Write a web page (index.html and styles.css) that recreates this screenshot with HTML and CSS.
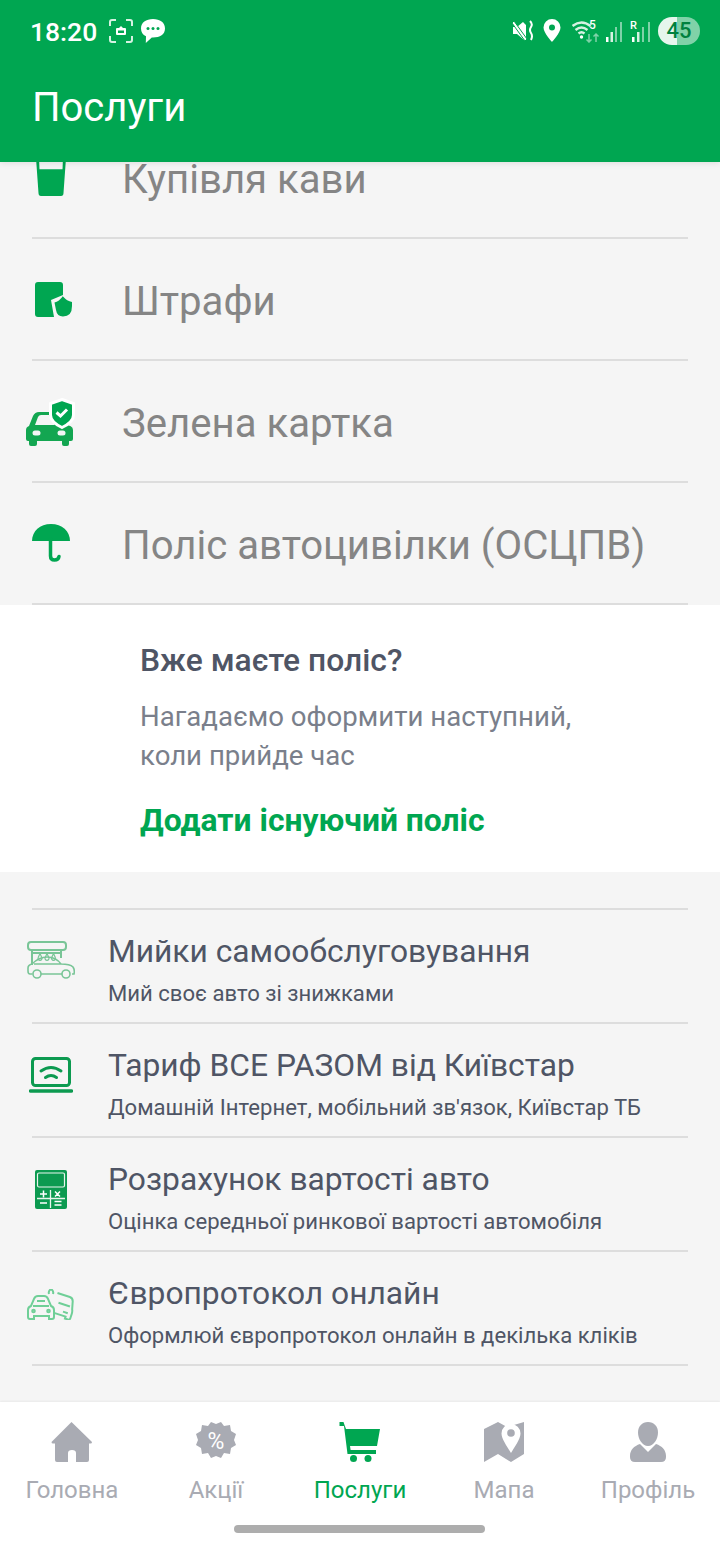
FILE: index.html
```html
<!DOCTYPE html>
<html lang="uk">
<head>
    <meta charset="UTF-8">
    <meta name="viewport" content="width=device-width, initial-scale=1.0">
    <title>Послуги</title>
    <link rel="stylesheet" href="styles.css">
</head>
<body>

<!-- Шапка -->
<div class="header">
    <div class="status-bar">
        <span class="status-time">18:20</span>
        <svg class="status-shot" width="24" height="24" viewBox="0 0 24 24" fill="none" stroke="#d6f2e2" stroke-width="2">
            <path d="M1 7V3q0-2 2-2h4M17 1h4q2 0 2 2v4M23 17v4q0 2-2 2h-4M7 23H3q-2 0-2-2v-4"/>
            <path d="M7 10q0-1 1-1h2l2-2 2 2h2q1 0 1 1v5q0 1-1 1H8q-1 0-1-1z" fill="#fff" stroke="none"/>
            <path d="M9 11.500h6v2.500H9z" fill="#00a651" stroke="none"/>
        </svg>
        <svg class="status-chat" width="24" height="24" viewBox="0 0 24 24">
            <path d="M12 0C5 0 0 3.500 0 9.500c0 3.700 1.800 6.300 5 7.700L4.800 24l6-5.500H12c7 0 12-3 12-9S19 0 12 0z" fill="#fff"/>
            <circle cx="7" cy="9.500" r="1.500" fill="#00a651"/>
            <circle cx="12" cy="9.500" r="1.500" fill="#00a651"/>
            <circle cx="17" cy="9.500" r="1.500" fill="#00a651"/>
        </svg>
        <div class="status-right">
            <svg width="22" height="24" viewBox="0 0 22 24">
                <path d="M1 8h4l6-5 3 3v16l-3-2-6-5H1z" fill="#fff"/>
                <path d="M0 4l2-2 13 18-2 2z" fill="#fff" stroke="#00a651" stroke-width="1"/>
                <path d="M18 2q3 3 1 6t0 6q2 3 0 7" fill="none" stroke="#fff" stroke-width="2"/>
            </svg>
            <svg class="status-pin" width="18" height="24" viewBox="0 0 18 24">
                <path fill-rule="evenodd" d="M9 0a8.500 8.500 0 0 1 8.500 8.500C17.500 14 9 23 9 23S.5 14 .5 8.500A8.500 8.500 0 0 1 9 0zm0 5.500a3 3 0 1 0 0 6 3 3 0 0 0 0-6z" fill="#fff"/>
            </svg>
            <svg class="status-wifi" width="28" height="24" viewBox="0 0 28 24" fill="none" stroke="#d6f2e2" stroke-width="2.400">
                <path d="M.5 7q9-7 18 0M3.500 11q6-5 12 0M6.500 14.500q3-2.500 6 0"/>
                <circle cx="9.500" cy="18" r="1.700" fill="#fff" stroke="none"/>
                <path d="M17 15v8M14.500 20.500l2.500 2.500 2.500-2.500" stroke="#7fd2a8" stroke-width="1.500"/>
                <path d="M24 23v-8M21.500 17.500l2.500-2.500 2.500 2.500" stroke="#7fd2a8" stroke-width="1.500"/>
                <text x="17" y="10" class="status-five">5</text>
            </svg>
            <svg class="status-signal" width="16" height="24" viewBox="0 0 16 24">
                <rect x="0" y="18" width="2.500" height="5" fill="#fff"/>
                <rect x="4.500" y="13" width="2.500" height="10" fill="#d6f2e2"/>
                <rect x="9" y="8" width="2" height="15" fill="#7fd2a8"/>
                <rect x="14" y="3" width="2" height="20" fill="#7fd2a8"/>
            </svg>
            <svg class="status-signal" width="20" height="24" viewBox="0 0 20 24">
                <text x="0" y="10" class="status-roam">R</text>
                <rect x="2" y="18" width="2.500" height="5" fill="#fff"/>
                <rect x="7" y="13" width="2.500" height="10" fill="#d6f2e2"/>
                <rect x="12" y="8" width="2" height="15" fill="#7fd2a8"/>
                <rect x="18" y="3" width="2" height="20" fill="#7fd2a8"/>
            </svg>
            <div class="battery">45</div>
        </div>
    </div>
    <h1>Послуги</h1>
</div>

<div class="content">
    <div class="content-inner">

        <!-- Основні послуги -->
        <div class="service">
            <div class="service-icon">
                <svg class="icon-cup" width="30" height="38" viewBox="0 0 30 38">
                    <path d="M0 0h30l-2.500 35q0 3-2.500 3H5q-2.500 0-2.500-3z" fill="#00a651"/>
                    <path d="M3 0h24l-.5 11.300h-23z" fill="#f5f5f5"/>
                </svg>
            </div>
            <span>Купівля кави</span>
        </div>
        <div class="service">
            <div class="service-icon">
                <svg class="icon-fines" width="37" height="35" viewBox="0 0 37 35">
                    <path d="M3 0h22q3 0 3 3v10l-12 5 3 17H3q-3 0-3-3V3q0-3 3-3z" fill="#00a651"/>
                    <path d="M28 14.500q4 4.500 9 5.500v4q0 10.500-9 10.500-6 0-7-6.500l-1.500-7.500q4.500-1 8.500-6.500z" fill="#00a651"/>
                </svg>
            </div>
            <span>Штрафи</span>
        </div>
        <div class="service">
            <div class="service-icon">
                <svg class="icon-car" width="50" height="49" viewBox="0 0 50 49">
                    <path d="M0 33q0-3 3-4l4-10q2-4 6-4h10l8 13h7q9 0 9 5v9q0 2-2 2h-2v3q0 2-2 2h-3q-2 0-2-2v-3H11v3q0 2-2 2H5q-2 0-2-2v-3H2q-2 0-2-2z" fill="#13a651"/>
                    <path d="M9 28l3-8q1-2 3-2h8l6 10z" fill="#f5f5f5"/>
                    <rect x="6.500" y="33.500" width="8" height="5" rx="2.500" fill="#f5f5f5"/>
                    <rect x="31.500" y="33.500" width="8" height="5" rx="2.500" fill="#f5f5f5"/>
                    <path d="M36 2.500l11.500 4v11.500q0 7-11.500 12.500-11.500-5.500-11.500-12.500V6.500z" fill="#00a651" stroke="#fff" stroke-width="3"/>
                    <path d="M30.500 15.500l4 3.500 6.500-6.500" fill="none" stroke="#fff" stroke-width="3"/>
                </svg>
            </div>
            <span>Зелена картка</span>
        </div>
        <div class="service">
            <div class="service-icon">
                <svg width="38" height="38" viewBox="0 0 38 38">
                    <path d="M0 17C0 7 8 0 19 0s19 7 19 17z" fill="#00a651"/>
                    <path d="M18.500 15v17q0 4 4 4t4.500-3.500" fill="none" stroke="#00a651" stroke-width="3.500" stroke-linecap="round"/>
                </svg>
            </div>
            <span>Поліс автоцивілки (ОСЦПВ)</span>
        </div>

        <!-- Блок поліса -->
        <div class="policy-card">
            <h2>Вже маєте поліс?</h2>
            <p>Нагадаємо оформити наступний,<br>коли прийде час</p>
            <a href="#">Додати існуючий поліс</a>
        </div>

        <!-- Додаткові послуги -->
        <div class="extras">
            <div class="extra">
                <div class="extra-icon">
                    <svg class="icon-wash" width="48" height="38" viewBox="0 0 48 38" fill="none" stroke="#79c597" stroke-width="1.600">
                        <rect x="1" y="1" width="38" height="8" rx="3" stroke-width="2"/>
                        <path d="M5 9v15M34 9v8M5 12h29" stroke-width="2"/>
                        <path d="M13 12.500l1.800 4a2 2 0 1 1-3.600 0zM20 12.500l1.800 4a2 2 0 1 1-3.600 0zM26.500 12.500l1.800 4a2 2 0 1 1-3.600 0z" stroke-width="1.200"/>
                        <path d="M5.500 33H3q-2 0-2-3v-3q0-3 4-4 7-7 15-7 9 0 14 7 9 0 12 3 2 3 1 7h-2M14 33h21M7 23h27"/>
                        <circle cx="10" cy="33" r="4"/>
                        <circle cx="39" cy="33" r="4"/>
                    </svg>
                </div>
                <div class="extra-text">
                    <div class="extra-title">Мийки самообслуговування</div>
                    <div class="extra-sub">Мий своє авто зі знижками</div>
                </div>
            </div>
            <div class="extra">
                <div class="extra-icon">
                    <svg class="icon-laptop" width="44" height="36" viewBox="0 0 44 36" fill="none" stroke="#0c9a50" stroke-width="3">
                        <rect x="3.500" y="1.500" width="37" height="27" rx="3"/>
                        <path d="M1.500 34h41" stroke-linecap="round" stroke-width="3.500"/>
                        <path d="M12 14q10-7 20 0M16.500 20.500q5.500-4 11 0" stroke-linecap="round"/>
                    </svg>
                </div>
                <div class="extra-text">
                    <div class="extra-title">Тариф ВСЕ РАЗОМ від Київстар</div>
                    <div class="extra-sub">Домашній Інтернет, мобільний зв'язок, Київстар ТБ</div>
                </div>
            </div>
            <div class="extra">
                <div class="extra-icon">
                    <svg class="icon-calc" width="32" height="39" viewBox="0 0 32 39">
                        <rect width="32" height="39" rx="2" fill="#0c9a50"/>
                        <rect x="2.500" y="3" width="27" height="14" rx="1.500" fill="none" stroke="#e8f5ed" stroke-width="1.200"/>
                        <path d="M2 28.500h28M15.500 20v18" stroke="#e8f5ed" stroke-width="1.300"/>
                        <path d="M5 24h7M8.500 20.500v7M5 33h7M20 21.500l5 5M25 21.500l-5 5M19.500 31.500h7M19.500 35h7" stroke="#fff" stroke-width="1.500"/>
                    </svg>
                </div>
                <div class="extra-text">
                    <div class="extra-title">Розрахунок вартості авто</div>
                    <div class="extra-sub">Оцінка середньої ринкової вартості автомобіля</div>
                </div>
            </div>
            <div class="extra">
                <div class="extra-icon">
                    <svg class="icon-crash" width="48" height="31" viewBox="0 0 48 31" fill="none" stroke="#6fcf97" stroke-width="2">
                        <path d="M1 28v-7q0-3 3-4l3-7q1-3 4-3h6q3 0 4 3l3 7q3 1 3 4v7q0 2-2 2h-3v-3H7v3H3q-2 0-2-2z"/>
                        <path d="M6 17h16M10 12h8"/>
                        <circle cx="6.500" cy="22" r="1.300"/>
                        <circle cx="21.500" cy="22" r="1.300"/>
                        <g transform="rotate(18 35 16)">
                            <path d="M27 6h13q3 0 4 3l2 8q1 2 1 4v5q0 2-2 2h-3v-2H29"/>
                            <path d="M31 15h12M38 22h5"/>
                        </g>
                        <path d="M22 5q-1-3 2-5 3 2 2 5"/>
                    </svg>
                </div>
                <div class="extra-text">
                    <div class="extra-title">Європротокол онлайн</div>
                    <div class="extra-sub">Оформлюй європротокол онлайн в декілька кліків</div>
                </div>
            </div>
        </div>
    </div>
</div>

<!-- Нижнє меню -->
<div class="tabbar">
    <div class="tabs">
        <div class="tab">
            <svg width="42" height="40" viewBox="0 0 42 40">
                <path d="M20.500 0L41 20q0 1.500-1.500 1.500H38V38q0 2-2 2H25V31q0-3-4-3t-4 3v9H6q-2 0-2-2V21.500H2q-1.500 0-1.500-1.500z" fill="#a9abb3"/>
            </svg>
            <span>Головна</span>
        </div>
        <div class="tab">
            <svg width="42" height="40" viewBox="0 0 42 40">
                <path d="M21 2l5-2 3 4 6-1 1 6 5 3-2 6 2 5-5 3-1 6-6-1-3 5-5-2-5 2-3-5-6 1-1-6-5-3 2-5-2-6 5-3 1-6 6 1 3-4z" fill="#a9abb3"/>
                <text x="21" y="27" text-anchor="middle" class="percent">%</text>
            </svg>
            <span>Акції</span>
        </div>
        <div class="tab tab-active">
            <svg width="42" height="40" viewBox="0 0 42 40">
                <path d="M.5 0h4l1.200 3.500L7 7h34l-3 17H11l.6 4H37v4H8.500L5 4H.5z" fill="#00a651"/>
                <circle cx="14.500" cy="36.500" r="3.500" fill="#00a651"/>
                <circle cx="29" cy="36.500" r="3.500" fill="#00a651"/>
            </svg>
            <span>Послуги</span>
        </div>
        <div class="tab">
            <svg width="42" height="40" viewBox="0 0 42 40">
                <path d="M1 7l14-7 9 5 17-5v32l-13 8-13-8-14 8z" fill="#a9abb3"/>
                <path d="M28 2a9.500 9.500 0 0 1 9.500 9.500C37.500 17 31 26 28 31c-3-5-9.500-14-9.500-19.500A9.500 9.500 0 0 1 28 2z" fill="#fff"/>
                <circle cx="28" cy="11" r="3.800" fill="#a9abb3"/>
            </svg>
            <span>Мапа</span>
        </div>
        <div class="tab">
            <svg width="42" height="40" viewBox="0 0 42 40">
                <path d="M21 0c6 0 10 4.500 10 10.500S27 24 21 24s-10-7.500-10-13.500S15 0 21 0z" fill="#a9abb3"/>
                <path d="M13 22l8 8 8-8c6 2 10 6 10 12v1q0 5-5 5H8q-5 0-5-5v-1c0-6 4-10 10-12z" fill="#a9abb3"/>
            </svg>
            <span>Профіль</span>
        </div>
    </div>
    <div class="home-indicator"></div>
</div>

</body>
</html>
```

FILE: styles.css
```css
/* Загальне */
* {
    box-sizing: border-box;
}

body {
    font-family: 'Roboto', sans-serif;
    margin: 0;
    width: 720px;
    height: 1544px;
    display: flex;
    flex-direction: column;
    background-color: #f5f5f5;
    overflow: hidden;
}

/* Шапка */
.header {
    height: 162px;
    background-color: #00a651;
    color: white;
    padding: 12px 20px 0 30px;
    flex-shrink: 0;
    position: relative;
    z-index: 1;
    box-shadow: 0 1px 6px rgba(0, 0, 0, 0.1);
}

.header h1 {
    margin: 34px 0 0 2px;
    font-size: 40px;
    line-height: 48px;
    font-weight: 400;
}

.status-bar {
    height: 38px;
    display: flex;
    align-items: center;
}

.status-time {
    font-size: 26.5px;
    font-weight: 500;
    width: 79px;
}

.status-chat {
    margin-left: 8px;
}

.status-right {
    margin-left: auto;
    display: flex;
    align-items: center;
}

.status-pin {
    margin-left: 9px;
}

.status-wifi {
    margin-left: 11px;
}

.status-five {
    font-size: 12px;
    font-weight: 500;
    fill: #fff;
    stroke: none;
}

.status-roam {
    font-size: 11px;
    font-weight: 500;
    fill: #fff;
}

.status-signal {
    margin-left: 6px;
}

.status-signal + .status-signal {
    margin-left: 8px;
}

.battery {
    width: 42px;
    height: 28px;
    margin-left: 8px;
    border-radius: 14px;
    background: linear-gradient(to right, #e6f6ed 0 45%, #80d2a8 45%);
    color: #00813f;
    font-size: 22px;
    font-weight: 500;
    line-height: 28px;
    text-align: center;
}

/* Основна частина */
.content {
    flex: 1;
    overflow: hidden;
}

.content-inner {
    margin-top: -45px;
}

.service {
    height: 122px;
    margin: 0 32px;
    border-bottom: 2px solid #dddddd;
    display: flex;
    align-items: center;
    color: #858585;
    font-size: 40.15px;
}

.service span {
    margin-top: 4px;
}

.service-icon {
    width: 90px;
    flex-shrink: 0;
    display: flex;
    align-items: center;
}

.icon-cup {
    margin-left: 4px;
}

.icon-fines {
    margin-left: 3px;
}

.icon-car {
    margin-left: -6px;
}

/* Картка поліса */
.policy-card {
    background-color: white;
    padding: 35px 140px 0;
    height: 267px;
}

.policy-card h2 {
    margin: 0;
    font-size: 31.8px;
    line-height: 40px;
    font-weight: 500;
    color: #4f5565;
}

.policy-card p {
    margin: 17px 0 0;
    font-size: 27.6px;
    line-height: 39px;
    color: #7a7f8b;
}

.policy-card a {
    display: block;
    margin-top: 25px;
    font-size: 31.8px;
    line-height: 40px;
    font-weight: 700;
    color: #00a651;
    text-decoration: none;
}

/* Додаткові послуги */
.extras {
    margin: 36px 32px 0;
    border-top: 2px solid #dddddd;
}

.extra {
    height: 114px;
    border-bottom: 2px solid #dddddd;
    display: flex;
    align-items: center;
}

.extra-icon {
    width: 81px;
    margin-left: -5px;
    flex-shrink: 0;
    display: flex;
    align-items: center;
}

.icon-wash {
    margin-top: -12px;
}

.icon-laptop {
    margin: -10px 0 0 2px;
}

.icon-calc {
    margin: -10px 0 0 8px;
}

.icon-crash {
    margin-top: -8px;
}

.extra-text {
    padding-top: 6px;
}

.extra-title {
    font-size: 31.75px;
    line-height: 42px;
    color: #4f5565;
}

.extra-sub {
    font-size: 22.1px;
    line-height: 30px;
    margin-top: 5px;
    color: #4f5565;
}

/* Нижнє меню */
.tabbar {
    height: 142px;
    flex-shrink: 0;
    background-color: white;
    padding-top: 20px;
    box-shadow: 0 -1px 2px rgba(0, 0, 0, 0.05);
}

.tabs {
    display: grid;
    grid-template-columns: repeat(5, 144px);
}

.tab {
    display: flex;
    flex-direction: column;
    align-items: center;
    font-size: 24px;
    color: #a9abb3;
}

.tab span {
    margin-top: 11px;
    line-height: 34px;
}

.tab-active {
    color: #00a651;
}

.percent {
    font-size: 23px;
    font-weight: 400;
    fill: #fff;
}

.home-indicator {
    width: 251px;
    height: 8px;
    margin: 18px 0 0 234px;
    border-radius: 4px;
    background-color: #adadad;
}
```
